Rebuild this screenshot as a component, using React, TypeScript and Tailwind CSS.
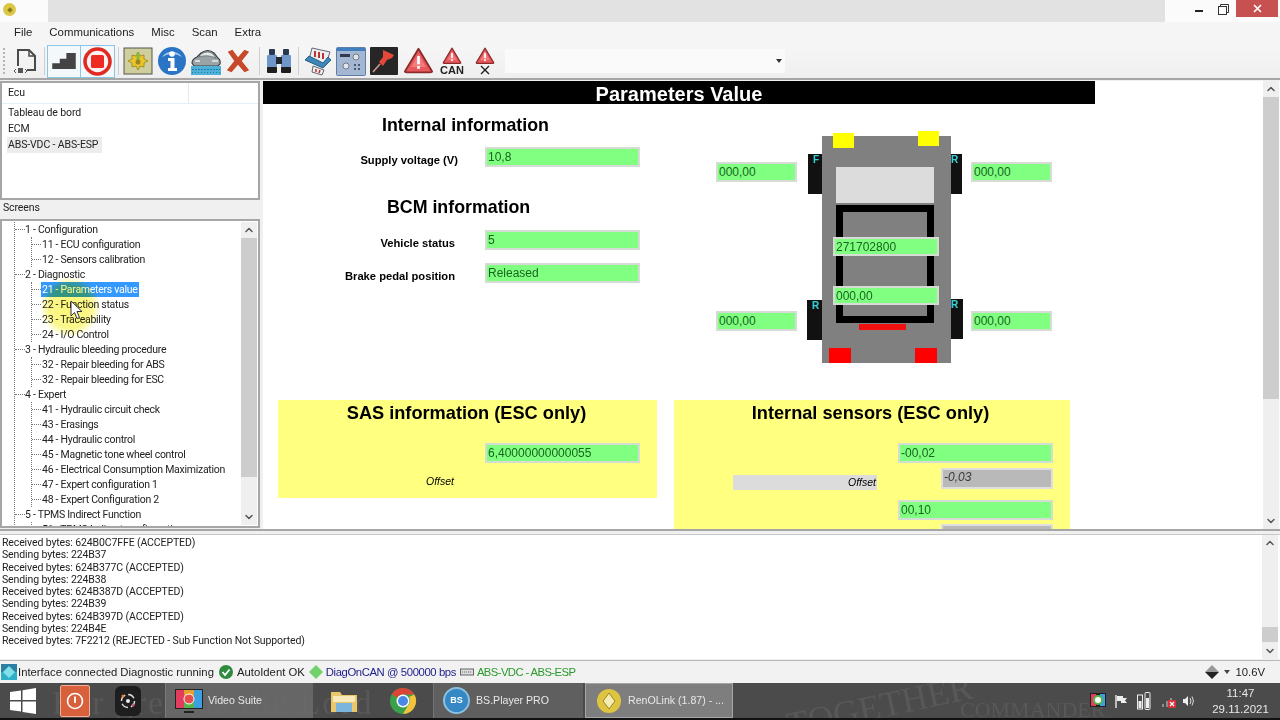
import { ChevronDown, ChevronUp } from "lucide-react";

const ui = "font-['Liberation_Sans',Arial,sans-serif]";
const small = "font-['Roboto',Arial,sans-serif] text-[10.5px] tracking-[-0.12px]";

const tree = [
  { label: "1 - Configuration", kids: ["11 - ECU configuration", "12 - Sensors calibration"] },
  { label: "2 - Diagnostic", kids: ["21 - Parameters value", "22 - Function status", "23 - Traceability", "24 - I/O Control"] },
  { label: "3 - Hydraulic bleeding procedure", kids: ["32 - Repair bleeding for ABS", "32 - Repair bleeding for ESC"] },
  {
    label: "4 - Expert",
    kids: [
      "41 - Hydraulic circuit check",
      "43 - Erasings",
      "44 - Hydraulic control",
      "45 - Magnetic tone wheel control",
      "46 - Electrical Consumption Maximization",
      "47 - Expert configuration 1",
      "48 - Expert Configuration 2",
    ],
  },
  { label: "5 - TPMS Indirect Function", kids: ["51 - TPMS Indirect configuration"] },
];

const logLines = [
  "Received bytes: 624B0C7FFE (ACCEPTED)",
  "Sending bytes: 224B37",
  "Received bytes: 624B377C (ACCEPTED)",
  "Sending bytes: 224B38",
  "Received bytes: 624B387D (ACCEPTED)",
  "Sending bytes: 224B39",
  "Received bytes: 624B397D (ACCEPTED)",
  "Sending bytes: 224B4E",
  "Received bytes: 7F2212 (REJECTED - Sub Function Not Supported)",
];

function Field({ value, className = "" }: { value: string; className?: string }) {
  return (
    <div className={`h-[20px] bg-[#80ff80] border-2 border-[#d4dcd4] pl-[1px] pt-[1px] text-[12px] leading-[15px] text-[#17651f] ${className}`}>
      {value}
    </div>
  );
}

function Scrollbar({ thumbTop, thumbHeight, className }: { thumbTop: number; thumbHeight: number; className: string }) {
  return (
    <div className={`relative flex flex-col items-center justify-between bg-[#efefef] py-[2px] ${className}`}>
      <ChevronUp size={12} strokeWidth={3} className="text-[#555]" />
      <div className="absolute left-0 right-0 bg-[#cdcdcd]" style={{ top: thumbTop, height: thumbHeight }} />
      <ChevronDown size={12} strokeWidth={3} className="text-[#555]" />
    </div>
  );
}

function Sep() {
  return <div className="w-[1px] h-[28px] bg-[#cfcfcf]" />;
}

function Triangle({ size = 34 }: { size?: number }) {
  return (
    <svg width={size} height={size * 0.88} viewBox="0 0 34 30">
      <path d="M17 2 L32 27 Q32 28 30 28 L4 28 Q2 28 2 27 Z" fill="#e8585c" stroke="#8a2a2a" strokeWidth="2" strokeLinejoin="round" />
      <path d="M17 8 L25 22 L9 22 Z" fill="#f47c7c" />
      <rect x="15.5" y="10" width="3" height="9" fill="#fff" />
      <rect x="15.5" y="21" width="3" height="3" fill="#fff" />
    </svg>
  );
}

function Toolbar() {
  return (
    <div className="h-[36px] flex items-center pl-[3px] bg-gradient-to-b from-[#f6f6f6] to-[#efefef] border-b-2 border-[#a6a6a6]">
      {/* grip */}
      <div className="w-[2px] h-[26px] border-l-2 border-dotted border-[#b5b5b5] mr-[7px]" />
      <svg width="26" height="28" viewBox="0 0 26 28" className="mr-[6px]">
        <path d="M6 19 V3 H17 L23 9 V23 H15" fill="none" stroke="#4a4a4a" strokeWidth="2" />
        <path d="M17 3 V9 H23" fill="none" stroke="#4a4a4a" strokeWidth="1.5" />
        <rect x="6" y="21" width="5" height="5" fill="#555" />
        <path d="M4 22 L2 24 L4 26 M13 22 L15 24 L13 26" fill="none" stroke="#555" strokeWidth="1" />
      </svg>
      <Sep />
      <div className="flex ml-[2px] h-[33px] border border-[#8cc4e4] bg-[#f3f8fb]">
        <div className="w-[33px] flex items-center justify-center border-r border-[#8cc4e4]">
          <svg width="24" height="16" viewBox="0 0 25 17">
            <path d="M0 17 V11 H8 V6 H15 V0 H25 V17 Z" fill="#444" />
          </svg>
        </div>
        <div className="w-[33px] flex items-center justify-center">
          <svg width="29" height="29" viewBox="0 0 29 29">
            <circle cx="14.5" cy="14.5" r="12.5" fill="#fdf2f2" stroke="#e12a22" strokeWidth="3.6" />
            <rect x="8" y="8" width="13" height="13" rx="1.5" fill="#ed2b22" />
          </svg>
        </div>
      </div>
      <div className="ml-[3px]"><Sep /></div>
      <svg width="30" height="28" viewBox="0 0 30 28" className="ml-[4px]">
        <rect x="1" y="1" width="28" height="26" fill="#cfcf9d" stroke="#555" strokeWidth="1" />
        <path d="M15 5 l2 4 4-1 0 4 4 2-4 2 0 4-4-1-2 4-2-4-4 1 0-4-4-2 4-2 0-4 4 1z" fill="#e8c52a" stroke="#8d7a17" strokeWidth=".7" />
        <rect x="13.5" y="6" width="3" height="7" fill="#8ab83a" />
        <circle cx="15" cy="15" r="2.5" fill="#9a8520" />
      </svg>
      <svg width="30" height="30" viewBox="0 0 30 30" className="ml-[4px]">
        <circle cx="15" cy="15" r="14" fill="#2a74c6" />
        <path d="M5 11 A12 12 0 0 1 25 11 A18 18 0 0 0 5 11" fill="#9cc8ef" />
        <circle cx="15" cy="8" r="2.8" fill="#fff" />
        <path d="M11 12 H17.5 V22 H20 V25 H11 V22 H13.5 V15 H11 Z" fill="#fff" />
      </svg>
      <svg width="30" height="30" viewBox="0 0 30 30" className="ml-[4px]">
        <path d="M1 17 Q1 13 6 11 L10 7 Q17 2 23 7 L27 12 Q30 14 29 18 L27 20 H3 Z" fill="#9aa4a6" stroke="#333b3d" strokeWidth="1.1" />
        <path d="M10 8 Q17 4 22 8 L25 12 Q16 8 8 11 Z" fill="#e3e8e9" stroke="#4b5456" strokeWidth=".6" />
        <path d="M4 15 H9 M21 15 H27" stroke="#e9eeee" strokeWidth="1.4" />
        <rect x="0" y="20" width="30" height="9" fill="#4fb0d8" />
        <path d="M1 23.5 H29" stroke="#1b7ea6" strokeWidth="1.2" strokeDasharray="2 1" />
        <path d="M1 26.5 H29" stroke="#1b7ea6" strokeWidth="1.2" strokeDasharray="1 2" />
      </svg>
      <svg width="26" height="26" viewBox="0 0 28 26" className="ml-[4px]">
        <path d="M3 3 L8 1 L14 9 L21 1 L26 3 L18 13 L26 23 L21 25 L14 17 L7 25 L2 23 L10 13 Z" fill="#c8482a" />
      </svg>
      <div className="ml-[8px]"><Sep /></div>
      <svg width="26" height="26" viewBox="0 0 26 26" className="ml-[6px]">
        <rect x="3" y="1" width="6" height="6" rx="1" fill="#28394f" />
        <rect x="17" y="1" width="6" height="6" rx="1" fill="#28394f" />
        <rect x="1" y="7" width="10" height="13" rx="1" fill="#6f96c9" />
        <rect x="15" y="7" width="10" height="13" rx="1" fill="#6f96c9" />
        <rect x="10" y="9" width="6" height="7" fill="#23272e" />
        <rect x="1" y="19" width="10" height="6" rx="1" fill="#1e1e1e" />
        <rect x="15" y="19" width="10" height="6" rx="1" fill="#1e1e1e" />
      </svg>
      <div className="ml-[6px]"><Sep /></div>
      <svg width="28" height="30" viewBox="0 0 28 30" className="ml-[5px]">
        <path d="M8 2 L26 6 L22 18 L5 14 Z" fill="#eee" stroke="#667" />
        <path d="M11 5 L11 11 M15 6 L15 12 M19 7 L19 13" stroke="#b33" strokeWidth="2" />
        <path d="M1 14 L19 22 L27 14 L24 11 L19 17 L5 10 Z" fill="#3e87b8" stroke="#275f85" />
        <path d="M9 20 L20 24 L18 29 L8 26 Z" fill="#eee" stroke="#667" />
        <path d="M12 23 L12 26 M16 24 L15 27" stroke="#b33" strokeWidth="1.5" />
      </svg>
      <svg width="30" height="29" viewBox="0 0 30 29" className="ml-[4px]">
        <rect x="0.5" y="0.5" width="29" height="28" rx="1" fill="#a3b6d2" stroke="#5e7da8" />
        <rect x="1" y="1" width="28" height="3" fill="#3f7fbf" />
        <rect x="4" y="7" width="10" height="3" fill="#2f3a4c" />
        <circle cx="20" cy="10" r="3" fill="#dfe5ec" stroke="#444" strokeWidth=".6" />
        <circle cx="10" cy="19" r="3" fill="#dfe5ec" stroke="#444" strokeWidth=".6" />
        <path d="M18 18h2M22 18h2M18 22h2M22 22h2" stroke="#2f3a4c" strokeWidth="1.6" />
      </svg>
      <svg width="28" height="28" viewBox="0 0 28 28" className="ml-[4px]">
        <rect width="28" height="28" rx="1" fill="#262626" />
        <path d="M13 3 L24 8 L22 11 L17 13 L13 19 L9 15 L13 10 Z" fill="#e4473b" />
        <path d="M10 17 L3 25" stroke="#d69a92" strokeWidth="1.5" />
      </svg>
      <div className="ml-[5px]"><Triangle size={31} /></div>
      <div className="ml-[3px] w-[30px] flex flex-col items-center">
        <Triangle size={20} />
        <span className={`${ui} text-[11px] leading-[10px] font-bold text-[#222]`}>CAN</span>
      </div>
      <div className="ml-[3px] w-[30px] flex flex-col items-center">
        <Triangle size={20} />
        <svg width="10" height="10" viewBox="0 0 10 10">
          <path d="M1 1 L9 9 M9 1 L1 9" stroke="#222" strokeWidth="1.4" />
        </svg>
      </div>
      {/* combo */}
      <div className="ml-[5px] w-[280px] h-[24px] bg-[#fafafa] flex items-center justify-end pr-[3px]">
        <svg width="6" height="4" viewBox="0 0 6 4"><path d="M0 0 H6 L3 4 Z" fill="#333" /></svg>
      </div>
    </div>
  );
}

function Tree() {
  return (
    <div className="relative h-[309px] mt-[6px] border-2 border-[#a6a6a6] bg-white flex overflow-hidden">
      <div className="flex-1 min-w-0 pt-[1px] font-['Roboto',Arial,sans-serif] text-[10.5px] tracking-[-0.27px] leading-[15px] text-[#222] overflow-hidden">
        <div className="ml-[12px] border-l border-dotted border-[#777]">
          {tree.map((group) => (
            <div key={group.label}>
              <div className="flex items-center h-[15px]">
                <span className="w-[10px] border-t border-dotted border-[#777]" />
                <span className="whitespace-nowrap">{group.label}</span>
              </div>
              <div className="ml-[16px] border-l border-dotted border-[#777]">
                {group.kids.map((kid) => (
                  <div key={kid} className="flex items-center h-[15px]">
                    <span className="w-[9px] border-t border-dotted border-[#777]" />
                    <span className={`whitespace-nowrap px-[1px] ${kid.startsWith("21") ? "bg-[#3399ff] text-white" : ""}`}>{kid}</span>
                  </div>
                ))}
              </div>
            </div>
          ))}
        </div>
      </div>
      <Scrollbar className="w-[16px] mr-[1px] my-[1px]" thumbTop={16} thumbHeight={239} />
      {/* mouse highlight */}
      <div className="absolute left-[38px] top-[56px] w-[60px] h-[60px] rounded-full mix-blend-multiply bg-[radial-gradient(circle,rgba(250,245,110,0.95)_0%,rgba(250,245,110,0.8)_50%,rgba(250,245,110,0)_72%)]" />
      <svg width="14" height="20" viewBox="0 0 14 20" className="absolute left-[68px] top-[79px]">
        <path d="M1 1 V16 L4.5 12.5 L7 18.5 L9.5 17.5 L7 11.5 H12 Z" fill="#fff" stroke="#333" strokeWidth="1" />
      </svg>
    </div>
  );
}

function Car() {
  return (
    <div className="relative w-[336px] h-[227px]">
      {/* wheels */}
      <div className="absolute left-[92px] top-[18px] w-[14px] h-[40px] bg-[#111] text-[#35d2dc] text-[10px] font-bold leading-[12px] pl-[5px]">F</div>
      <div className="absolute left-[235px] top-[18px] w-[11px] h-[40px] bg-[#111] text-[#35d2dc] text-[10px] font-bold leading-[12px]">R</div>
      <div className="absolute left-[91px] top-[164px] w-[15px] h-[40px] bg-[#111] text-[#35d2dc] text-[10px] font-bold leading-[12px] pl-[5px]">R</div>
      <div className="absolute left-[235px] top-[163px] w-[12px] h-[40px] bg-[#111] text-[#35d2dc] text-[10px] font-bold leading-[12px]">R</div>
      {/* body */}
      <div className="absolute left-[106px] top-0 w-[129px] h-[227px] bg-[#808080]">
        <div className="absolute left-[14px] top-[31px] w-[98px] h-[36px] bg-[#dcdcdc]" />
        <div className="absolute left-[14px] top-[69px] w-[98px] h-[118px] border-[7px] border-black" />
        <div className="absolute left-[37px] top-[188px] w-[47px] h-[6px] bg-[#f01010]" />
        <div className="absolute left-[7px] top-[212px] w-[22px] h-[15px] bg-[#ff0000]" />
        <div className="absolute left-[93px] top-[212px] w-[22px] h-[15px] bg-[#ff0000]" />
      </div>
      <div className="absolute left-[117px] top-[-3px] w-[21px] h-[15px] bg-[#ffff00]" />
      <div className="absolute left-[202px] top-[-5px] w-[21px] h-[15px] bg-[#ffff00]" />
      <Field value="271702800" className="absolute left-[117px] top-[101px] w-[106px] !h-[19px] border-[#cfe8cf]" />
      <Field value="000,00" className="absolute left-[117px] top-[150px] w-[106px] !h-[19px] border-[#cfe8cf]" />
      <Field value="000,00" className="absolute left-0 top-[26px] w-[81px]" />
      <Field value="000,00" className="absolute left-[255px] top-[26px] w-[81px]" />
      <Field value="000,00" className="absolute left-0 top-[175px] w-[81px]" />
      <Field value="000,00" className="absolute left-[255px] top-[175px] w-[81px]" />
    </div>
  );
}

function Content() {
  return (
    <div className="flex-1 min-w-0 flex overflow-hidden bg-white">
      <div className="w-[1001px] overflow-hidden text-black">
        <div className="w-[832px] h-[23px] bg-black text-white text-center font-bold text-[20px] leading-[26px]">Parameters Value</div>
        <div className="flex h-[296px]">
          <div className="w-[453px]">
            <h2 className="mt-[9px] ml-[119px] text-[17.8px] leading-[24px] font-bold">Internal information</h2>
            <div className="flex items-start mt-[10px] h-[20px]">
              <span className="w-[195px] pt-[6px] text-right text-[11.2px] leading-[14px] font-bold">Supply voltage (V)</span>
              <Field value="10,8" className="ml-[27px] w-[155px]" />
            </div>
            <h2 className="mt-[28px] ml-[124px] text-[17.8px] leading-[24px] font-bold">BCM information</h2>
            <div className="flex items-start mt-[11px] h-[20px]">
              <span className="w-[192px] pt-[6px] text-right text-[11.2px] leading-[14px] font-bold">Vehicle status</span>
              <Field value="5" className="ml-[30px] w-[155px]" />
            </div>
            <div className="flex items-start mt-[13px] h-[20px]">
              <span className="w-[192px] pt-[6px] text-right text-[11.2px] leading-[14px] font-bold">Brake pedal position</span>
              <Field value="Released" className="ml-[30px] w-[155px]" />
            </div>
          </div>
          <div className="pt-[32px]">
            <Car />
          </div>
        </div>
        <div className="flex items-start pl-[15px] gap-[17px]">
          <section className="w-[379px] h-[98px] bg-[#ffff80]">
            <h3 className="text-center text-[18.2px] font-bold leading-[24px] pt-[1px] pr-[2px]">SAS information (ESC only)</h3>
            <Field value="6,40000000000055" className="ml-[207px] mt-[18px] w-[155px]" />
            <p className="mt-[11px] ml-[148px] text-[10.5px] italic">Offset</p>
          </section>
          <section className="w-[396px] h-[130px] bg-[#ffff80]">
            <h3 className="text-center text-[18.2px] font-bold leading-[24px] pt-[1px] pr-[3px]">Internal sensors (ESC only)</h3>
            <Field value="-00,02" className="ml-[224px] mt-[18px] w-[155px]" />
            <div className="flex items-start h-[26px]">
              <div className="ml-[59px] mt-[12px] w-[144px] h-[15px] bg-[#dcdcdc] text-right pr-[1px] text-[10.5px] leading-[15px] italic">Offset</div>
              <div className="ml-[64px] mt-[5px] w-[112px] h-[21px] bg-[#b9b9b9] border-2 border-[#dedede] pl-[1px] text-[12px] leading-[15px] italic text-[#3a3a3a]">-0,03</div>
            </div>
            <Field value="00,10" className="ml-[224px] mt-[11px] w-[155px]" />
            <div className="ml-[267px] mt-[4px] w-[112px] h-[20px] bg-[#b9b9b9] border-2 border-[#dedede]" />
          </section>
        </div>
      </div>
      <Scrollbar className="w-[16px] ml-auto mr-[1px]" thumbTop={16} thumbHeight={302} />
    </div>
  );
}

function Taskbar() {
  return (
    <div className="relative h-[37px] bg-[#4b4b4b] border-b-2 border-[#111] overflow-hidden flex items-stretch text-[10.6px] text-[#e8e8e8]">
      {/* wallpaper showing through */}
      <div className="absolute left-[52px] top-[-6px] text-[34px] font-['Liberation_Serif',serif] whitespace-nowrap text-[#585858] tracking-[2px]">For great is the Lord</div>
      <div className="absolute left-[785px] top-[-4px] text-[36px] font-['Liberation_Serif',serif] whitespace-nowrap text-[#585858] -rotate-12">TOGETHER</div>
      <div className="absolute left-[960px] top-[10px] text-[22px] font-['Liberation_Serif',serif] whitespace-nowrap text-[#585858]">COMMANDER</div>
      <div className="relative w-[44px] flex items-center justify-center">
        <svg width="26" height="26" viewBox="0 0 26 26" className="ml-[1px]">
          <path d="M0 4 L11 2.5 V12 H0 Z M12.5 2.3 L26 0 V12 H12.5 Z M0 13.5 H11 V23.5 L0 22 Z M12.5 13.5 H26 V26 L12.5 24 Z" fill="#fff" />
        </svg>
      </div>
      <div className="relative w-[46px] flex items-center justify-end">
        <div className="w-[30px] h-[32px] bg-[#d8603c] border border-[#f0b098] rounded-[2px] flex items-center justify-center">
          <svg width="18" height="18" viewBox="0 0 18 18">
            <circle cx="9" cy="9" r="7.5" fill="none" stroke="#fff" strokeWidth="1.6" />
            <path d="M9 4.5 V11" stroke="#fff" strokeWidth="1.8" />
          </svg>
        </div>
      </div>
      <div className="relative w-[75px] flex items-center justify-center">
        <div className="w-[26px] h-[30px] bg-[#1e1e1e] rounded-[6px] flex items-center justify-center">
          <svg width="20" height="20" viewBox="0 0 20 20">
            <circle cx="10" cy="10" r="6.5" fill="none" stroke="#ddd" strokeWidth="1.5" strokeDasharray="7 3" />
            <circle cx="10" cy="10" r="2" fill="#eee" />
            <circle cx="5" cy="5" r="1.5" fill="#e9813a" />
            <circle cx="15" cy="14" r="1.5" fill="#d85a8c" />
          </svg>
        </div>
      </div>
      <div className="relative w-[148px] bg-[#6d6d6d]/80 border-l border-[#7b7b7b] flex items-center pl-[8px] gap-[4px]">
        <svg width="30" height="30" viewBox="0 0 30 30">
          <rect x="1" y="3" width="28" height="20" fill="#222" />
          <path d="M2 4 H10 V22 H2 Z" fill="#e23d5c" />
          <path d="M10 4 H20 V10 H10 Z" fill="#e8a02c" />
          <path d="M20 4 H28 V22 H20 Z" fill="#3ca0e0" />
          <path d="M10 16 H20 V22 H10 Z" fill="#55b74b" />
          <circle cx="15" cy="13" r="5" fill="#e84c4c" stroke="#fff" />
          <rect x="10" y="25" width="10" height="2" fill="#222" />
        </svg>
        <span>Video Suite</span>
      </div>
      <div className="relative w-[120px] flex items-center">
        <svg width="28" height="26" viewBox="0 0 28 26" className="ml-[17px]">
          <path d="M1 4 H10 L12 7 H27 V24 H1 Z" fill="#e9c76a" />
          <rect x="3" y="8" width="22" height="6" fill="#f7e9b9" />
          <rect x="6" y="15" width="16" height="9" fill="#7bb4dc" />
        </svg>
        <svg width="28" height="28" viewBox="0 0 28 28" className="ml-[31px] shrink-0">
          <circle cx="14" cy="14" r="13" fill="#3aa14a" />
          <path d="M14 1 A13 13 0 0 1 25.3 7.5 H14 A6.5 6.5 0 0 0 8 11 L2.8 7 A13 13 0 0 1 14 1" fill="#dc4437" />
          <path d="M25.3 7.5 A13 13 0 0 1 14 27 L19.5 17.5 A6.5 6.5 0 0 0 20 10 Z" fill="#f5c33b" />
          <circle cx="14" cy="14" r="6.5" fill="#fff" />
          <circle cx="14" cy="14" r="5" fill="#4a88e8" />
        </svg>
      </div>
      <div className="relative w-[150px] bg-[#646464]/80 border-l border-[#747474] flex items-center pl-[9px] gap-[6px]">
        <div className="w-[27px] h-[27px] rounded-full bg-[#3588c4] border-2 border-[#8cc0e0] flex items-center justify-center text-[9px] font-bold text-white">BS</div>
        <span>BS.Player PRO</span>
      </div>
      <div className="relative ml-[2px] w-[148px] bg-[#7e7e7e] border border-[#a5a5a5] flex items-center pl-[10px] gap-[6px]">
        <svg width="26" height="26" viewBox="0 0 26 26">
          <circle cx="13" cy="13" r="12" fill="#dfc53f" />
          <path d="M13 5 L19 13 L13 21 L7 13 Z" fill="#f5ecb4" stroke="#9b8420" />
        </svg>
        <span className="whitespace-nowrap">RenOLink (1.87) - ...</span>
      </div>
      {/* tray */}
      <div className="relative ml-auto flex items-center pr-[15px]">
        <svg width="16" height="16" viewBox="0 0 16 16" className="mr-[9px]">
          <rect width="16" height="14" fill="#222" />
          <path d="M1 1 H6 V13 H1Z" fill="#e23d5c" />
          <path d="M10 1 H15 V13 H10Z" fill="#3ca0e0" />
          <circle cx="8" cy="7" r="4" fill="#fff" stroke="#55b74b" strokeWidth="2" />
        </svg>
        <svg width="13" height="14" viewBox="0 0 13 14" className="mr-[9px]">
          <path d="M1 1 V14" stroke="#eee" strokeWidth="1.4" />
          <path d="M2 2 H8 V4 H12 L10 6.5 L12 9 H6 V7 H2 Z" fill="#eee" />
        </svg>
        <svg width="14" height="18" viewBox="0 0 14 18" className="mr-[10px]">
          <rect x="0.5" y="3" width="5" height="14" fill="none" stroke="#eee" />
          <rect x="1.5" y="9" width="3" height="7" fill="#eee" />
          <rect x="8" y="0.5" width="5" height="17" rx="1" fill="none" stroke="#eee" />
          <rect x="9" y="6" width="3" height="10" fill="#eee" />
        </svg>
        <svg width="16" height="16" viewBox="0 0 16 16" className="mr-[5px]">
          <path d="M1 14 h2 v-3 h-2z M5 14 h2 v-6 h-2z M9 14 h2 v-9 h-2z" fill="#8d8d8d" />
          <rect x="7" y="7" width="8" height="8" rx="1" fill="#d6303a" />
          <path d="M9 9 L13 13 M13 9 L9 13" stroke="#fff" strokeWidth="1.2" />
        </svg>
        <svg width="14" height="14" viewBox="0 0 14 14" className="mr-[20px]">
          <path d="M1 5 H3 L6 2 V12 L3 9 H1 Z" fill="#eee" />
          <path d="M8 4 Q10 7 8 10 M10 2.5 Q13 7 10 11.5" fill="none" stroke="#ddd" />
        </svg>
        <div className="w-[49px] flex flex-col items-center text-[11.5px] leading-[16px]">
          <span>11:47</span>
          <span className="whitespace-nowrap">29.11.2021</span>
        </div>
      </div>
    </div>
  );
}

export default function App() {
  return (
    <div className={`w-[1280px] h-[720px] overflow-hidden flex flex-col bg-[#f0f0f0] ${ui}`}>
      {/* title bar */}
      <div className="h-[22px] flex bg-[#fbfbfb]">
        <div className="w-[48px] pl-[3px] pt-[3px]">
          <div className="w-[13px] h-[13px] rounded-full bg-[#dcc745] flex items-center justify-center">
            <div className="w-[4px] h-[4px] bg-[#8b7a1c] rotate-45" />
          </div>
        </div>
        <div className="w-[1117px] bg-[#e2e2e2]" />
        <div className="flex-1 flex items-start">
          <div className="w-[8px] h-[2px] mt-[10px] ml-[30px] bg-[#222]" />
          <svg width="11" height="11" viewBox="0 0 11 11" className="mt-[4px] ml-[15px]">
            <rect x="0.5" y="2.5" width="8" height="8" fill="none" stroke="#333" />
            <path d="M2.5 2.5 V0.5 H10.5 V8.5 H8.5" fill="none" stroke="#333" />
          </svg>
          <div className="w-[42px] h-[17px] ml-[7px] bg-[#c75050] flex items-center justify-center">
            <svg width="9" height="9" viewBox="0 0 9 9"><path d="M1 1 L8 8 M8 1 L1 8" stroke="#fff" strokeWidth="1.6" /></svg>
          </div>
        </div>
      </div>
      {/* menu */}
      <div className="h-[22px] flex items-center pl-[14px] gap-[17px] text-[11.4px] text-[#222] bg-[#f5f5f5]">
        <span>File</span>
        <span>Communications</span>
        <span>Misc</span>
        <span>Scan</span>
        <span>Extra</span>
      </div>
      <Toolbar />
      {/* main area */}
      <div className="h-[449px] flex pt-[1px]">
        <div className={`w-[260px] mr-[3px] text-[#222] ${small}`}>
          <div className="h-[119px] border-2 border-[#a6a6a6] bg-white">
            <div className="h-[21px] flex border-b border-[#e4eef5]">
              <div className="w-[187px] border-r border-[#e8e8e8] pl-[6px] leading-[20px]">Ecu</div>
            </div>
            <div className="pt-[1px] pl-[6px] leading-[16px]">
              <div>Tableau de bord</div>
              <div>ECM</div>
              <div className="w-[95px] -ml-[1px] pl-[1px] bg-[#ececec] whitespace-nowrap">ABS-VDC - ABS-ESP</div>
            </div>
          </div>
          <div className="h-[13px] pl-[3px] pt-[1px] leading-[13px]">Screens</div>
          <Tree />
        </div>
        <Content />
      </div>
      <div className="h-[2px] bg-[#a6a6a6]" />
      <div className="h-[4px] bg-[#f0f0f0] border-b border-[#c8c8c8]" />
      {/* log */}
      <div className="h-[124px] flex bg-white">
        <div className={`flex-1 pl-[2px] pt-[2px] ${small} leading-[12.25px] text-[#222]`}>
          {logLines.map((line, i) => (
            <div key={i} className="h-[12.25px] whitespace-nowrap">{line}</div>
          ))}
        </div>
        <Scrollbar className="w-[16px] mr-[2px]" thumbTop={92} thumbHeight={15} />
      </div>
      <div className="h-[2px] bg-[#f0f0f0] border-b border-[#b8b8b8]" />
      {/* status bar */}
      <div className="h-[22px] flex items-center bg-[#f2f2f2] pl-[1px] text-[11.3px] text-[#222] whitespace-nowrap">
        <svg width="16" height="16" viewBox="0 0 16 16" className="mr-[1px]">
          <rect width="16" height="8" fill="#2a7fa5" />
          <rect y="8" width="16" height="8" fill="#2fb0c8" />
          <path d="M8 2 L14 8 L8 14 L2 8 Z" fill="#7fe0e8" />
        </svg>
        <span>Interface connected Diagnostic running</span>
        <svg width="14" height="14" viewBox="0 0 14 14" className="ml-[5px] mr-[4px]">
          <circle cx="7" cy="7" r="7" fill="#2e8b3d" />
          <path d="M3.5 7 L6 10 L10.5 4.5" fill="none" stroke="#fff" strokeWidth="1.8" />
        </svg>
        <span>AutoIdent OK</span>
        <svg width="14" height="14" viewBox="0 0 14 14" className="ml-[4px] mr-[3px]">
          <path d="M7 0 L14 7 L7 14 L0 7 Z" fill="#6fd26a" />
        </svg>
        <span className="text-[#1c1c8c] tracking-[-0.4px]">DiagOnCAN @ 500000 bps</span>
        <svg width="14" height="10" viewBox="0 0 14 10" className="ml-[4px] mr-[3px]">
          <rect x="0.5" y="2" width="13" height="6" fill="#ddd" stroke="#666" />
          <path d="M2 5 H12" stroke="#666" strokeDasharray="1 1" />
        </svg>
        <span className="text-[#2a9a2a] tracking-[-0.6px]">ABS-VDC - ABS-ESP</span>
        <div className="ml-auto flex items-center pr-[15px]">
          <svg width="14" height="14" viewBox="0 0 14 14" className="mr-[5px]">
            <path d="M7 0 L14 7 H0 Z" fill="#999" />
            <path d="M7 14 L14 7 H0 Z" fill="#222" />
          </svg>
          <svg width="6" height="4" viewBox="0 0 6 4" className="mr-[5px]"><path d="M0 0 H6 L3 4 Z" fill="#444" /></svg>
          <span>10.6V</span>
        </div>
      </div>
      <Taskbar />
    </div>
  );
}
